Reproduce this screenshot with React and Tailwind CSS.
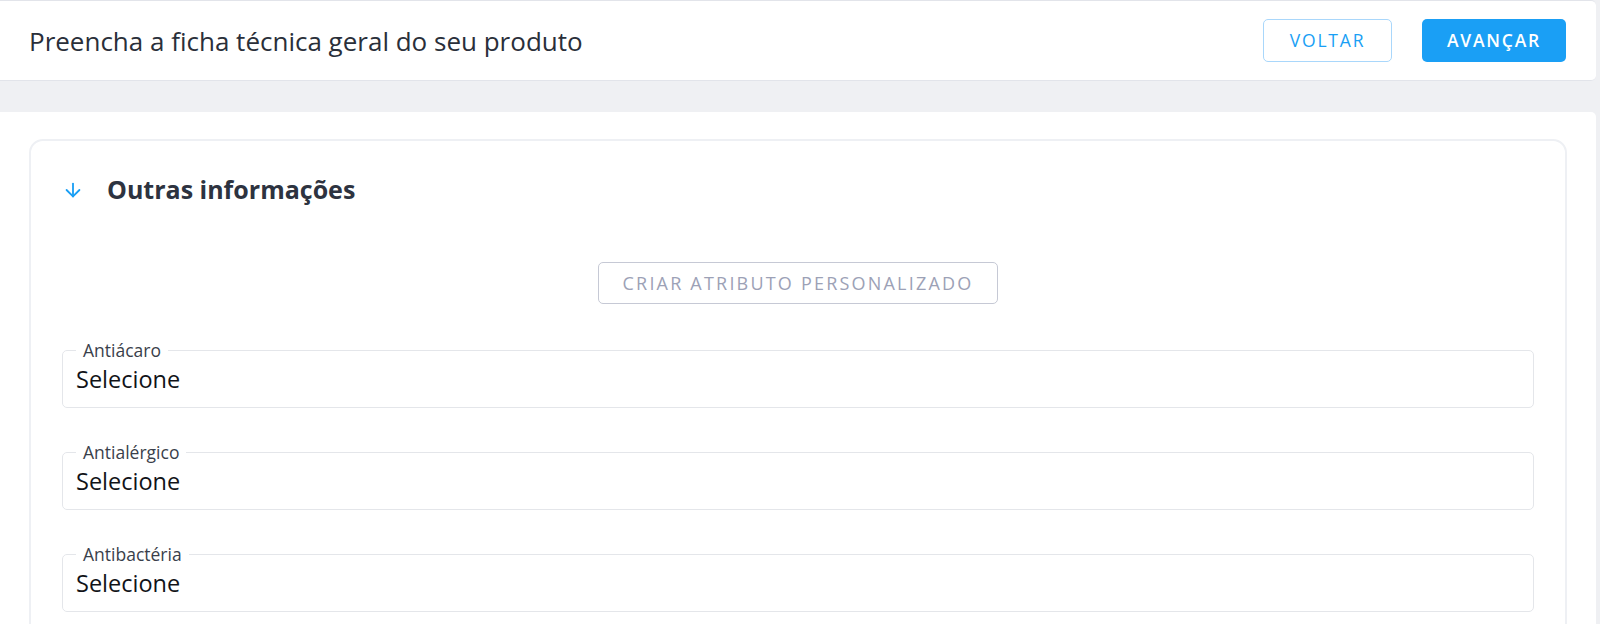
import React from 'react';
import { ArrowDown } from 'lucide-react';

const fields = ['Antiácaro', 'Antialérgico', 'Antibactéria'];

function SelectField({ label }) {
  return (
    <fieldset className="border border-[#e4e6ea] rounded-[5px] px-[13px] min-w-0">
      <legend className="px-[7px] text-[17.5px] leading-[20px] text-[#3a3f4b]">{label}</legend>
      <div className="pt-[4px] pb-[13px] text-[23.5px] leading-[30px] text-[#111318]">Selecione</div>
    </fieldset>
  );
}

export default function App() {
  return (
    <div className="min-h-screen bg-[#eff0f3] font-['Open_Sans',sans-serif]">
      {/* Top bar */}
      <div className="mr-[4px] h-[81px] bg-white border-t border-b border-[#e2e4ea] rounded-r-[5px] flex items-center justify-between pl-[29px] pr-[30px]">
        <h1 className="text-[26px] text-[#2a2f3a] leading-none">Preencha a ficha técnica geral do seu produto</h1>
        <div className="flex items-center gap-[30px]">
          <button className="w-[129px] h-[43px] rounded-[5px] border border-[#a9d7fb] bg-white text-[#1a9ff5] text-[17.5px] tracking-[1.8px] font-medium">
            VOLTAR
          </button>
          <button className="w-[144px] h-[43px] rounded-[5px] bg-[#1a9ff5] text-white text-[17.5px] tracking-[1.8px] font-semibold">
            AVANÇAR
          </button>
        </div>
      </div>

      {/* Content */}
      <div className="mt-[31px] mr-[4px] bg-white rounded-tr-[5px] px-[29px] pt-[27px] h-[520px] overflow-hidden">
        <div className="border-2 border-[#eef0f4] rounded-[14px] px-[31px] pb-10">
          <div className="flex items-center pt-[33px] h-[65px]">
            <ArrowDown size={22} strokeWidth={2} className="text-[#1a9ff5]" />
            <h2 className="ml-[23px] text-[25px] font-bold text-[#2d3340]">Outras informações</h2>
          </div>

          <div className="flex justify-center mt-[56px]">
            <button className="w-[400px] h-[42px] rounded-[5px] border border-[#c6c9d5] text-[#9ca1b6] text-[18px] tracking-[2.2px]">
              CRIAR ATRIBUTO PERSONALIZADO
            </button>
          </div>

          <div className="mt-[36px] flex flex-col gap-[34px]">
            {fields.map((f) => (
              <SelectField key={f} label={f} />
            ))}
          </div>
        </div>
      </div>
    </div>
  );
}
